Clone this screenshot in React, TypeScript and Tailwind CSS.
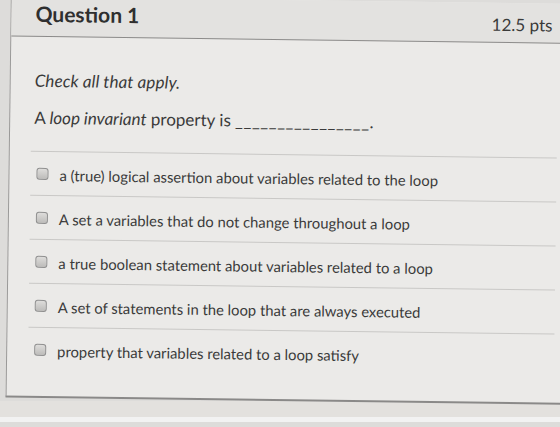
const options = [
  "a (true) logical assertion about variables related to the loop",
  "A set a variables that do not change throughout a loop",
  "a true boolean statement about variables related to a loop",
  "A set of statements in the loop that are always executed",
  "property that variables related to a loop satisfy",
];

function Checkbox() {
  return (
    <span className="block w-[12px] h-[12px] shrink-0 rounded-[3px] border border-[#8f8f8f] bg-gradient-to-b from-[#dedddb] to-[#bdbcba]" />
  );
}

export default function App() {
  return (
    <div className="w-[560px] h-[427px] overflow-hidden bg-[#dddcda] font-['Lato',sans-serif] text-[#3a3a3a]">
      <div className="w-[580px] h-[401px] rotate-[0.75deg] origin-[280px_213px] pl-[8px]">
        <div className="h-full border-l border-b-2 border-[#9a9998] border-b-[#8a8988] bg-[#ebeae8] flex flex-col">
          {/* header */}
          <div className="h-[40px] shrink-0 bg-[#e3e2e0] border-b-[1.5px] border-[#8c8b8a] flex items-start justify-between pr-[30px]">
            <h2 className="pl-[24px] pt-[1px] text-[21px] font-bold text-[#2f2f2f]">Question 1</h2>
            <span className="pt-[9px] text-[17px] text-[#3a3a3a]">12.5 pts</span>
          </div>

          {/* body */}
          <div className="pl-[24px] pr-[24px]">
            <p className="mt-[32px] text-[17px] italic tracking-[0.1px] leading-[24px]">Check all that apply.</p>
            <p className="mt-[13px] text-[17px] leading-[24px]">
              A <em>loop invariant</em> property is{" "}
              <span className="tracking-[0.6px]">________________</span>.
            </p>

            <div className="mt-[21px] ml-[-3px] border-t border-[#c9c8c6]">
              {options.map((text) => (
                <div
                  key={text}
                  className="h-[44px] flex items-center gap-[11px] pl-[6px] border-b border-[#c9c8c6] last:border-b-0"
                >
                  <Checkbox />
                  <span className="text-[14.8px] leading-none pt-[3px]">{text}</span>
                </div>
              ))}
            </div>
          </div>
        </div>
      </div>
      <div className="h-[21px] bg-[#e3e1de] border-b-[5px] border-[#f2f2f2]" />
    </div>
  );
}
